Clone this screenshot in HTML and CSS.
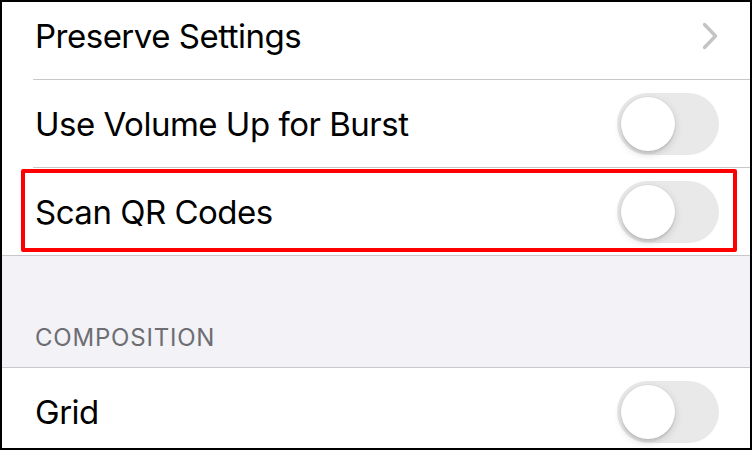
FILE: index.html
```html
<!DOCTYPE html>
<html lang="en">
  <head>
    <meta charset="UTF-8" />
    <meta name="viewport" content="width=device-width, initial-scale=1" />
    <title>Camera Settings</title>
    <link rel="stylesheet" href="styles.css">
  </head>
  <body>
    <!-- ===== SCREEN ===== -->
    <div class="screen">
      <div class="list">
        <!-- === GROUP: capture === -->
        <section class="group">
          <div class="cell">
            <div class="cell-inner">
              <span class="cell-label">Preserve Settings</span>
              <svg class="chevron" viewBox="0 0 16 28"><polyline points="2.5,2.5 13.5,14 2.5,25.5"/></svg>
            </div>
          </div>
          <div class="cell">
            <div class="cell-inner">
              <span class="cell-label">Use Volume Up for Burst</span>
              <span class="toggle"><span class="knob"></span></span>
            </div>
          </div>
          <div class="cell cell-marked">
            <div class="cell-inner">
              <span class="cell-label">Scan QR Codes</span>
              <span class="toggle"><span class="knob"></span></span>
            </div>
            <span class="highlight"></span>
          </div>
        </section>

        <!-- === GROUP: composition === -->
        <h3 class="group-header">COMPOSITION</h3>
        <section class="group">
          <div class="cell">
            <div class="cell-inner">
              <span class="cell-label">Grid</span>
              <span class="toggle"><span class="knob"></span></span>
            </div>
          </div>
        </section>
      </div>
    </div>
  </body>
</html>
```

FILE: styles.css
```css
:root {
  /* palette */
  --c-bg: #fff;
  --c-grouped: #f2f2f7;
  --c-sep: #c8c7cc;
  --c-text: #000;
  --c-muted: #6d6d72;
  --c-track: #e9e9ea;
  --c-chevron: #c4c4c7;
  --c-mark: #ff0000;

  /* sizing */
  --h-cell: 87px;
  --inset: 31px;
}
*,*::before,*::after{box-sizing:border-box;margin:0;padding:0}
html,body{height:100%;background:var(--c-bg);color:var(--c-text);font-family:"Inter","Noto Sans",sans-serif;overflow:hidden}

/* ===== SCREEN ===== */
.screen{width:752px;height:450px;border:2px solid #000;overflow:hidden;background:var(--c-grouped)}
.list{margin-top:-10px}

/* ===== GROUPS ===== */
.group{background:var(--c-bg);border-top:1px solid var(--c-sep);border-bottom:1px solid var(--c-sep)}
.group:first-child{border-top:none}
.group-header{height:111px;display:flex;align-items:flex-end;padding:0 var(--inset) 13px 33px;font-size:24px;font-weight:400;line-height:32px;letter-spacing:.8px;color:var(--c-muted)}

/* cells */
.cell{padding-left:var(--inset);position:relative}
.cell-inner{height:calc(var(--h-cell) + 1px);display:flex;align-items:center;justify-content:space-between;padding-right:var(--inset);border-bottom:1px solid var(--c-sep)}
.cell:last-child .cell-inner{height:var(--h-cell);border-bottom:none}
.cell-label{font-size:33px;line-height:40px;padding-left:2px;letter-spacing:-.015em}

/* chevron */
.chevron{width:16px;height:28px;margin-right:1px;fill:none;stroke:var(--c-chevron);stroke-width:3.4;stroke-linecap:round;stroke-linejoin:round}

/* toggle (off) */
.toggle{width:102px;height:62px;border-radius:31px;background:var(--c-track);padding:4px;display:flex}
.knob{width:54px;height:54px;border-radius:50%;background:#fff;box-shadow:0 3px 1px rgba(0,0,0,.06),0 3px 8px rgba(0,0,0,.15),0 0 0 1px rgba(0,0,0,.03)}

/* annotation box */
.highlight{position:absolute;left:19px;top:1px;right:13px;bottom:3px;border:4px solid var(--c-mark);border-radius:2px;pointer-events:none}
```
